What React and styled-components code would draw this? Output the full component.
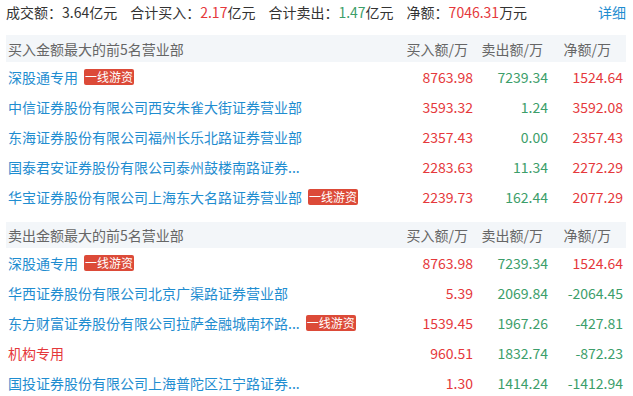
import React from 'react'
import styled, { createGlobalStyle } from 'styled-components'

const GlobalStyle = createGlobalStyle`
    body {
        margin: 0;
        background: #fff;
        font-family: "Noto Sans CJK SC", "Microsoft YaHei", sans-serif;
        font-size: 14px;
        color: #333;
    }
`

const RED = '#e5383b'
const GREEN = '#3c9e6a'
const BLUE = '#1f8dd0'

const Wrapper = styled.div`
    width: 620px;
    padding: 0 6px;
`

const Summary = styled.div`
    display: flex;
    align-items: center;
    height: 24px;
    line-height: 24px;
    margin-bottom: 11px;
`

const SummaryItem = styled.span`
    margin-right: 13px;
    white-space: nowrap;
`

const Value = styled.span`
    color: ${(props) => props.color || '#333'};
`

const DetailLink = styled.a`
    margin-left: auto;
    color: ${BLUE};
    text-decoration: none;
    cursor: pointer;
`

const Section = styled.div`
    margin-bottom: ${(props) => props.gap || 0}px;
`

const Grid = styled.div`
    display: grid;
    grid-template-columns: 1fr 75px 75px 75px;
    align-items: center;
    padding: 0 3px 0 2px;
`

const HeadRow = styled(Grid)`
    height: ${(props) => props.h}px;
    background: #f3f6f9;
    color: #666;
`

const HeadCell = styled.div`
    text-align: right;
    padding-right: ${(props) => props.pr || 0}px;
    white-space: nowrap;
`

const Row = styled(Grid)`
    height: 30px;
`

const Name = styled.div`
    display: flex;
    align-items: center;
    color: ${(props) => props.color || BLUE};
    white-space: nowrap;
    overflow: hidden;
`

const Badge = styled.span`
    display: inline-block;
    margin-left: 6px;
    padding: 0 1px;
    height: 16px;
    line-height: 16px;
    font-size: 12px;
    color: #fff;
    background: #dc4a38;
    border-radius: 2px;
`

const Num = styled.div`
    text-align: right;
    color: ${(props) => (props.up ? RED : GREEN)};
    white-space: nowrap;
`

const buyList = [
    { name: '深股通专用', badge: true, buy: '8763.98', sell: '7239.34', net: '1524.64' },
    { name: '中信证券股份有限公司西安朱雀大街证券营业部', buy: '3593.32', sell: '1.24', net: '3592.08' },
    { name: '东海证券股份有限公司福州长乐北路证券营业部', buy: '2357.43', sell: '0.00', net: '2357.43' },
    { name: '国泰君安证券股份有限公司泰州鼓楼南路证券...', buy: '2283.63', sell: '11.34', net: '2272.29' },
    { name: '华宝证券股份有限公司上海东大名路证券营业部', badge: true, buy: '2239.73', sell: '162.44', net: '2077.29' },
]

const sellList = [
    { name: '深股通专用', badge: true, buy: '8763.98', sell: '7239.34', net: '1524.64' },
    { name: '华西证券股份有限公司北京广渠路证券营业部', buy: '5.39', sell: '2069.84', net: '-2064.45' },
    { name: '东方财富证券股份有限公司拉萨金融城南环路...', badge: true, buy: '1539.45', sell: '1967.26', net: '-427.81' },
    { name: '机构专用', red: true, buy: '960.51', sell: '1832.74', net: '-872.23' },
    { name: '国投证券股份有限公司上海普陀区江宁路证券...', buy: '1.30', sell: '1414.24', net: '-1412.94' },
]

function Table({ title, list, headHeight }) {
    return (
        <>
            <HeadRow h={headHeight}>
                <div>{title}</div>
                <HeadCell pr={5}>买入额/万</HeadCell>
                <HeadCell pr={5}>卖出额/万</HeadCell>
                <HeadCell pr={12}>净额/万</HeadCell>
            </HeadRow>
            {list.map((item, i) => (
                <Row key={i}>
                    <Name color={item.red ? RED : undefined}>
                        {item.name}
                        {item.badge && <Badge>一线游资</Badge>}
                    </Name>
                    <Num up>{item.buy}</Num>
                    <Num>{item.sell}</Num>
                    <Num up={!item.net.startsWith('-')}>{item.net}</Num>
                </Row>
            ))}
        </>
    )
}

export default function App() {
    return (
        <Wrapper>
            <GlobalStyle />
            <Summary>
                <SummaryItem>成交额：3.64亿元</SummaryItem>
                <SummaryItem>合计买入：<Value color={RED}>2.17</Value>亿元</SummaryItem>
                <SummaryItem>合计卖出：<Value color={GREEN}>1.47</Value>亿元</SummaryItem>
                <SummaryItem>净额：<Value color={RED}>7046.31</Value>万元</SummaryItem>
                <DetailLink>详细</DetailLink>
            </Summary>
            <Section gap={10}>
                <Table title="买入金额最大的前5名营业部" list={buyList} headHeight={27} />
            </Section>
            <Section>
                <Table title="卖出金额最大的前5名营业部" list={sellList} headHeight={26} />
            </Section>
        </Wrapper>
    )
}
